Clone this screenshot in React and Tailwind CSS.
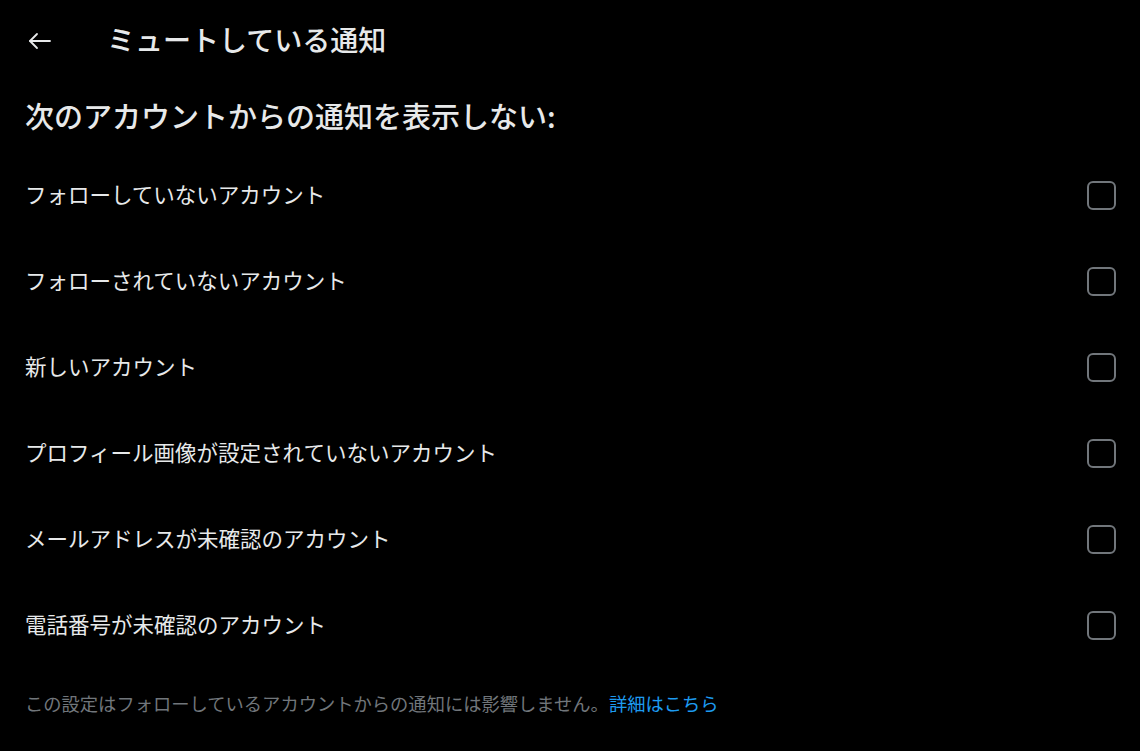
import React, { useState } from "react";

const options = [
  "フォローしていないアカウント",
  "フォローされていないアカウント",
  "新しいアカウント",
  "プロフィール画像が設定されていないアカウント",
  "メールアドレスが未確認のアカウント",
  "電話番号が未確認のアカウント",
];

const BackArrow = () => (
  <svg width="24" height="24" viewBox="0 0 24 24" fill="none" stroke="#e7e9ea" strokeWidth="1.8" strokeLinecap="round" strokeLinejoin="round">
    <path d="M22 12H2" />
    <path d="M9 5l-7 7 7 7" />
  </svg>
);

const Row = ({ label }) => {
  const [checked, setChecked] = useState(false);
  return (
    <div className="flex h-[86px] items-center justify-between pl-[25px] pr-[24px]">
      <span className="pb-[2px] text-[21.5px] leading-none text-[#e7e9ea]">{label}</span>
      <button
        className={
          "h-[29px] w-[29px] rounded-[6px] border-2 " +
          (checked ? "border-[#1d9bf0] bg-[#1d9bf0]" : "border-[#71767b] bg-transparent")
        }
        onClick={() => setChecked(!checked)}
      />
    </div>
  );
};

export default function App() {
  return (
    <div
      className="min-h-[751px] w-full bg-black text-[#e7e9ea]"
      style={{ fontFamily: '"Noto Sans CJK JP", "Noto Sans", sans-serif' }}
    >
      <div className="flex h-[82px] items-center">
        <div className="flex w-[107px] items-center pl-[28px]">
          <BackArrow />
        </div>
        <h1 className="pb-[4px] text-[28px] font-medium leading-none">ミュートしている通知</h1>
      </div>

      <div className="flex h-[70px] items-center pl-[25px]">
        <h2 className="pb-[4px] text-[29px] font-medium leading-none">次のアカウントからの通知を表示しない:</h2>
      </div>

      <div className="flex flex-col">
        {options.map((o) => (
          <Row key={o} label={o} />
        ))}
      </div>

      <div className="flex h-[72px] items-center pl-[25px]">
        <p className="pb-[2px] text-[18.3px] leading-none text-[#71767b]">
          この設定はフォローしているアカウントからの通知には影響しません。
          <a href="#" className="text-[#1d9bf0]">詳細はこちら</a>
        </p>
      </div>
    </div>
  );
}
